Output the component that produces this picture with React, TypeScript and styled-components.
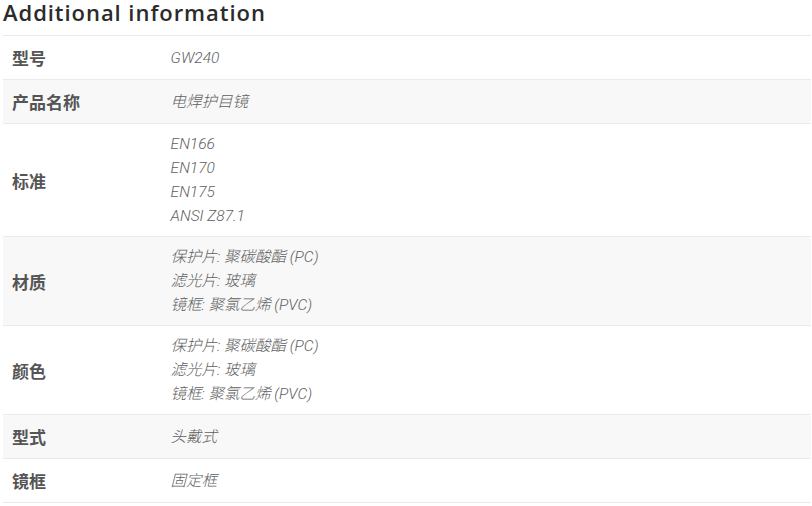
import * as React from "react"
import styled, { createGlobalStyle } from "styled-components"

const GlobalStyle = createGlobalStyle`
    html, body {
        margin: 0;
        padding: 0;
        background: #fff;
    }
`

const Page = styled.div`
    padding: 0 1px 0 3px;
    font-family: Roboto, "Noto Sans CJK SC", sans-serif;
`

const Title = styled.h2`
    margin: 0;
    height: 35px;
    font-family: "Open Sans", "Noto Sans", sans-serif;
    font-size: 22px;
    font-weight: 600;
    line-height: 25px;
    letter-spacing: 0.95px;
    color: #2b2b2b;
`

const Table = styled.table`
    width: 100%;
    border-collapse: collapse;
    border-spacing: 0;
`

const Row = styled.tr<{ $striped: boolean }>`
    background-color: ${(p) => (p.$striped ? "#f8f8f8" : "#fff")};
    border-top: 1px solid #ebebeb;
    border-bottom: 1px solid #ebebeb;
`

const Label = styled.th`
    width: 20%;
    padding: 8px 9px;
    text-align: left;
    vertical-align: middle;
    font-family: "Noto Sans CJK SC", sans-serif;
    font-size: 17px;
    font-weight: 700;
    line-height: 27px;
    color: #555;
`

const Value = styled.td`
    padding: 8px 8px 8px 6px;
    vertical-align: middle;
    font-family: Roboto, "Noto Sans CJK SC", sans-serif;
    font-size: 15.5px;
    font-weight: 300;
    font-style: italic;
    line-height: 24px;
    color: #5f5f5f;
`

const Line = styled.div`
    white-space: nowrap;
`

const rows: { label: string; values: string[] }[] = [
    { label: "型号", values: ["GW240"] },
    { label: "产品名称", values: ["电焊护目镜"] },
    { label: "标准", values: ["EN166", "EN170", "EN175", "ANSI Z87.1"] },
    { label: "材质", values: ["保护片: 聚碳酸酯 (PC)", "滤光片: 玻璃", "镜框: 聚氯乙烯 (PVC)"] },
    { label: "颜色", values: ["保护片: 聚碳酸酯 (PC)", "滤光片: 玻璃", "镜框: 聚氯乙烯 (PVC)"] },
    { label: "型式", values: ["头戴式"] },
    { label: "镜框", values: ["固定框"] },
]

export default function App(): JSX.Element {
    return (
        <Page>
            <GlobalStyle />
            <Title>Additional information</Title>
            <Table>
                <tbody>
                    {rows.map((row, i) => (
                        <Row key={row.label + i} $striped={i % 2 === 1}>
                            <Label>{row.label}</Label>
                            <Value>
                                {row.values.map((v) => (
                                    <Line key={v}>{v}</Line>
                                ))}
                            </Value>
                        </Row>
                    ))}
                </tbody>
            </Table>
        </Page>
    )
}
